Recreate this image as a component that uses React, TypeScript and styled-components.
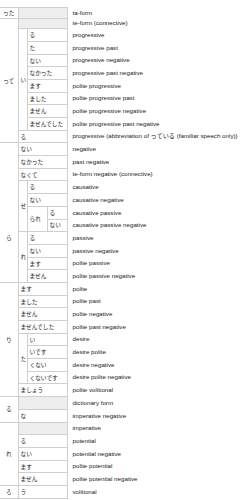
import React from "react";
import styled, { createGlobalStyle } from "styled-components";

const GlobalStyle = createGlobalStyle`
  html, body {
    margin: 0;
    padding: 0;
    background: #fff;
  }
  body {
    width: 240px;
    height: 500px;
    overflow: hidden;
  }
`;

const Page = styled.div`
  padding-top: 7px;
`;

const Table = styled.table`
  width: 240px;
  table-layout: fixed;
  border-collapse: collapse;
  font-family: "Liberation Sans", "Noto Sans CJK JP", sans-serif;
  color: #222;
`;

const Col = styled.col<{ $w?: number }>`
  width: ${(p) => (p.$w ? `${p.$w}px` : "auto")};
`;

const Row = styled.tr<{ $short?: boolean }>`
  height: ${(p) => (p.$short ? "10.6px" : "12.69px")};
`;

type Open = "top" | "bottom";

const Kana = styled.td<{ $lead?: boolean; $gray?: boolean; $open?: Open }>`
  border: 1px solid #cfcfcf;
  background: ${(p) => (p.$gray ? "#eeeeee" : "#fff")};
  font-family: "Noto Sans CJK JP", sans-serif;
  font-size: 5.7px;
  line-height: 1;
  padding: 0 0 0 2px;
  white-space: nowrap;
  vertical-align: middle;
  ${(p) => p.$lead && "border-left: none; text-align: center; padding: 0;"}
  ${(p) => p.$open && `border-${p.$open}: none;`}
`;

const Label = styled.td`
  border: none;
  padding: 0 0 0 5px;
  font-size: 6.2px;
  line-height: 1;
  white-space: nowrap;
  vertical-align: middle;
`;

type Cell = {
  t?: string;
  rs?: number;
  cs?: number;
  lead?: boolean;
  gray?: boolean;
  open?: Open;
};

type Line = { cells: Cell[]; label: string; short?: boolean };

const widths = [18, 9, 20, 20, 0];

const lines: Line[] = [
  { short: true, cells: [{ t: "った", lead: true }, { cs: 3, gray: true }], label: "ta-form" },
  { short: true, cells: [{ t: "って", rs: 10, lead: true }, { cs: 3, gray: true }], label: "te-form (connective)" },
  { cells: [{ t: "い", rs: 8 }, { t: "る", cs: 2 }], label: "progressive" },
  { cells: [{ t: "た", cs: 2 }], label: "progressive past" },
  { cells: [{ t: "ない", cs: 2 }], label: "progressive negative" },
  { cells: [{ t: "なかった", cs: 2 }], label: "progressive past negative" },
  { cells: [{ t: "ます", cs: 2 }], label: "polite progressive" },
  { cells: [{ t: "ました", cs: 2 }], label: "polite progressive past" },
  { cells: [{ t: "ません", cs: 2 }], label: "polite progressive negative" },
  { cells: [{ t: "ませんでした", cs: 2 }], label: "polite progressive past negative" },
  { cells: [{ t: "る", cs: 3 }], label: "progressive (abbreviation of っている (familiar speech only))" },
  { cells: [{ rs: 4, lead: true, open: "bottom" }, { t: "ない", cs: 3 }], label: "negative" },
  { cells: [{ t: "なかった", cs: 3 }], label: "past negative" },
  { cells: [{ t: "なくて", cs: 3 }], label: "te-form negative (connective)" },
  { cells: [{ t: "せ", rs: 4 }, { t: "る", cs: 2 }], label: "causative" },
  { cells: [{ t: "ら", rs: 7, lead: true, open: "top" }, { t: "ない", cs: 2 }], label: "causative negative" },
  { cells: [{ t: "られ", rs: 2 }, { t: "る" }], label: "causative passive" },
  { cells: [{ t: "ない" }], label: "causative passive negative" },
  { cells: [{ t: "れ", rs: 4 }, { t: "る", cs: 2 }], label: "passive" },
  { cells: [{ t: "ない", cs: 2 }], label: "passive negative" },
  { cells: [{ t: "ます", cs: 2 }], label: "polite passive" },
  { cells: [{ t: "ません", cs: 2 }], label: "polite passive negative" },
  { cells: [{ t: "り", rs: 9, lead: true }, { t: "ます", cs: 3 }], label: "polite" },
  { cells: [{ t: "ました", cs: 3 }], label: "polite past" },
  { cells: [{ t: "ません", cs: 3 }], label: "polite negative" },
  { cells: [{ t: "ませんでした", cs: 3 }], label: "polite past negative" },
  { cells: [{ t: "た", rs: 4 }, { t: "い", cs: 2 }], label: "desire" },
  { cells: [{ t: "いです", cs: 2 }], label: "desire polite" },
  { cells: [{ t: "くない", cs: 2 }], label: "desire negative" },
  { cells: [{ t: "くないです", cs: 2 }], label: "desire polite negative" },
  { cells: [{ t: "ましょう", cs: 3 }], label: "polite volitional" },
  { cells: [{ t: "る", rs: 2, lead: true }, { cs: 3, gray: true }], label: "dictionary form" },
  { cells: [{ t: "な", cs: 3 }], label: "imperative negative" },
  { cells: [{ t: "れ", rs: 5, lead: true }, { cs: 3, gray: true }], label: "imperative" },
  { cells: [{ t: "る", cs: 3 }], label: "potential" },
  { cells: [{ t: "ない", cs: 3 }], label: "potential negative" },
  { cells: [{ t: "ます", cs: 3 }], label: "polite potential" },
  { cells: [{ t: "ません", cs: 3 }], label: "polite potential negative" },
  { cells: [{ t: "ろ", lead: true }, { t: "う", cs: 3 }], label: "volitional" },
];

export default function App() {
  return (
    <Page>
      <GlobalStyle />
      <Table>
        <colgroup>
          {widths.map((w, i) => (
            <Col key={i} $w={w} />
          ))}
        </colgroup>
        <tbody>
          {lines.map((line, i) => (
            <Row key={i} $short={line.short}>
              {line.cells.map((c, j) => (
                <Kana
                  key={j}
                  rowSpan={c.rs}
                  colSpan={c.cs}
                  $lead={c.lead}
                  $gray={c.gray}
                  $open={c.open}
                >
                  {c.t}
                </Kana>
              ))}
              <Label>{line.label}</Label>
            </Row>
          ))}
        </tbody>
      </Table>
    </Page>
  );
}
